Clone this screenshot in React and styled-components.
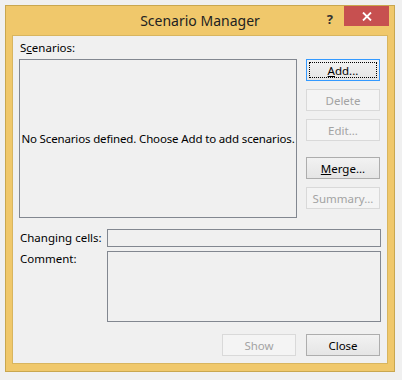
import React from 'react'
import styled, { createGlobalStyle } from 'styled-components'

const Global = createGlobalStyle`
  html, body {
    margin: 0;
    background: #f0f0f0;
  }
  body {
    font-family: "Noto Sans", "DejaVu Sans", sans-serif;
    font-size: 11.5px;
    color: #000;
  }
`

let Window = styled.div`
  margin: 5px 0 0 5px;
  width: 390px;
  height: 367px;
  box-sizing: border-box;
  border: 1px solid #c9a74f;
  background: #f0c86b;
  display: flex;
  flex-direction: column;
  padding: 0 6px 7px 6px;
`

let TitleBar = styled.div`
  height: 29px;
  position: relative;
  display: flex;
  align-items: center;
  justify-content: center;
  .title {
    font-size: 14px;
    color: #222;
    margin-top: -1px;
  }
  .help {
    position: absolute;
    right: 55px;
    top: 4px;
    font-weight: bold;
    font-size: 13px;
    color: #333;
  }
`

let CloseX = styled.div`
  position: absolute;
  right: -1px;
  top: 0;
  width: 45px;
  height: 20px;
  background: #c75050;
  display: grid;
  place-content: center;
`

let Client = styled.div`
  flex: 1;
  border: 1px solid #d8b55f;
  background: #f0f0f0;
  padding: 5px 6px 0 6px;
  display: flex;
  flex-direction: column;
`

let Top = styled.div`
  display: flex;
  gap: 9px;
`

let Label = styled.div`
  line-height: 14px;
  padding-left: 1px;
  white-space: nowrap;
  u { text-decoration: underline; text-underline-offset: 1px; }
`

let ListBox = styled.div`
  margin-top: 4px;
  width: 278px;
  height: 159px;
  box-sizing: border-box;
  border: 1px solid #828790;
  display: grid;
  place-content: center;
  white-space: nowrap;
  letter-spacing: -0.15px;
`

let Buttons = styled.div`
  padding-top: 18px;
  display: flex;
  flex-direction: column;
`

let Button = styled.div`
  width: 74px;
  height: 22px;
  box-sizing: border-box;
  border: 1px solid ${p => p.$primary ? '#3399ff' : p.$disabled ? '#d9d9d9' : '#adadad'};
  background: ${p => p.$disabled ? '#f4f4f4' : 'linear-gradient(#f2f2f2, #e5e5e5)'};
  color: ${p => p.$disabled ? '#a3a3a3' : '#000'};
  margin-top: ${p => p.$gap || 0}px;
  display: flex;
  align-items: center;
  justify-content: center;
  position: relative;
  ${p => p.$primary && `
    &::after {
      content: "";
      position: absolute;
      inset: 2px;
      border: 1px dotted #000;
    }
  `}
  u { text-decoration: underline; text-underline-offset: 1px; }
`

let FieldRow = styled.div`
  display: flex;
  margin-top: ${p => p.$gap}px;
  ${Label} {
    width: 87px;
    padding-top: ${p => p.$labelTop}px;
  }
`

let Input = styled.div`
  width: 274px;
  height: ${p => p.$h}px;
  box-sizing: border-box;
  border: 1px solid #828790;
`

let Footer = styled.div`
  display: flex;
  justify-content: flex-end;
  gap: 10px;
  margin-top: 12px;
  padding-right: 1px;
`

export default function App() {
  return (
    <>
      <Global />
      <Window>
        <TitleBar>
          <span className="title">Scenario Manager</span>
          <span className="help">?</span>
          <CloseX>
            <svg width="10" height="9" viewBox="0 0 10 9">
              <path d="M1 0.5 L9 8.5 M9 0.5 L1 8.5" stroke="#fff" strokeWidth="1.8" />
            </svg>
          </CloseX>
        </TitleBar>
        <Client>
          <Top>
            <div>
              <Label>S<u>c</u>enarios:</Label>
              <ListBox>No Scenarios defined. Choose Add to add scenarios.</ListBox>
            </div>
            <Buttons>
              <Button $primary><span><u>A</u>dd...</span></Button>
              <Button $disabled $gap={8}>Delete</Button>
              <Button $disabled $gap={8}>Edit...</Button>
              <Button $gap={16}><span><u>M</u>erge...</span></Button>
              <Button $disabled $gap={8}>Summary...</Button>
            </Buttons>
          </Top>
          <FieldRow $gap={11} $labelTop={2}>
            <Label>Changing cells:</Label>
            <Input $h={18} />
          </FieldRow>
          <FieldRow $gap={4} $labelTop={1}>
            <Label>Comment:</Label>
            <Input $h={71} />
          </FieldRow>
          <Footer>
            <Button $disabled>Show</Button>
            <Button>Close</Button>
          </Footer>
        </Client>
      </Window>
    </>
  )
}
